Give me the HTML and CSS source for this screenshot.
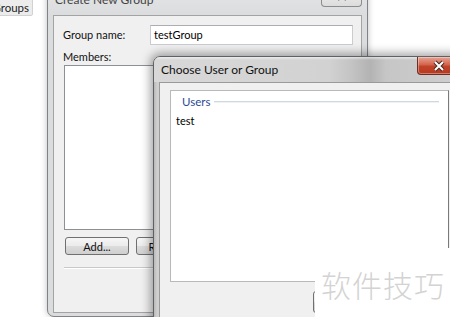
FILE: index.html
```html
<!DOCTYPE html>
<html lang="en">
<head>
    <meta charset="UTF-8">
    <title>Create New Group</title>
    <link rel="stylesheet" href="styles.css">
</head>
<body>
<div class="desk">
    <button class="tab-btn">Groups</button>

    <!-- back dialog -->
    <div class="win create">
        <div class="title-bar">
            <span class="title">Create New Group</span>
            <span class="close-btn idle">
                <svg width="12" height="10" viewBox="0 0 12 10"><path d="M2 1 L10 9 M10 1 L2 9" stroke="#555" stroke-width="2.2" fill="none"/></svg>
            </span>
        </div>
        <div class="client">
            <div class="field-row">
                <span class="lbl">Group name:</span>
                <div class="input">testGroup</div>
            </div>
            <div class="lbl members">Members:</div>
            <div class="listbox"></div>
            <div class="btn-row">
                <button class="btn">Add...</button>
                <button class="btn">Remove</button>
            </div>
            <div class="sep"></div>
        </div>
    </div>

    <!-- front dialog -->
    <div class="win choose">
        <div class="title-bar">
            <span class="title">Choose User or Group</span>
            <span class="close-btn hot">
                <svg width="14" height="12" viewBox="0 0 14 12">
                    <path d="M3 2 L11 10 M11 2 L3 10" stroke="#4a2a22" stroke-width="4" fill="none"/>
                    <path d="M3 2 L11 10 M11 2 L3 10" stroke="#fff" stroke-width="2" fill="none"/>
                </svg>
            </span>
        </div>
        <div class="client">
            <div class="pick-box">
                <div class="group-head"><span>Users</span><i class="rule"></i></div>
                <div class="item">test</div>
            </div>
            <div class="btn-row right">
                <button class="btn" aria-label="OK"></button>
            </div>
        </div>
    </div>

    <div class="watermark">软件技巧</div>
</div>
</body>
</html>
```

FILE: styles.css
```css
body {
    margin: 0;
    background: #fff;
    font-family: Lato, "Noto Sans", sans-serif;
    font-size: 11px;
    color: #000;
}
.desk {
    position: relative;
    width: 450px;
    height: 317px;
    overflow: hidden;
}
.tab-btn {
    position: absolute;
    left: -22px;
    top: -6px;
    width: 55px;
    height: 22px;
    padding: 5px 3px 0 0;
    text-align: right;
    font: inherit;
    font-size: 11.5px;
    color: #222;
    background: #ececec;
    border: 1px solid #d2d2d2;
    border-radius: 2px;
}

/* window frames */
.win {
    position: absolute;
    box-sizing: border-box;
    border: 1px solid #7f8387;
    border-radius: 7px;
    display: flex;
    flex-direction: column;
}
.title-bar {
    position: relative;
    display: flex;
    align-items: flex-end;
}
.title {
    font-size: 12px;
    color: #222;
    white-space: nowrap;
}
.close-btn {
    position: absolute;
    top: -1px;
    display: flex;
    align-items: center;
    justify-content: center;
    box-sizing: border-box;
    border-radius: 0 0 4px 4px;
}
.client {
    flex: 1;
    background: #f0f0f0;
    border: 1px solid #a3a3a3;
    display: flex;
    flex-direction: column;
}

/* Create New Group */
.create {
    left: 47px;
    top: -14px;
    width: 321px;
    height: 331px;
    padding: 0 5px 3px;
    background: #dadcde;
    box-shadow: 0 0 6px rgba(0, 0, 0, .25);
}
.create .title-bar {
    height: 28px;
    background: linear-gradient(#e4e6e8, #dadcde);
    margin: 0 -5px;
    padding: 0 0 0 7px;
}
.create .title {
    line-height: 14px;
    margin-bottom: 8px;
    color: #444;
}
.create .close-btn.idle {
    left: 273px;
    top: -1px;
    width: 41px;
    height: 21px;
    align-items: flex-end;
    padding-bottom: 5px;
    background: linear-gradient(#f4f4f4, #dcdcdc);
    border: 1px solid #8c8c8c;
    border-top: none;
}
.create .client {
    padding: 9px 8px 0 9px;
}
.field-row {
    display: flex;
    align-items: center;
}
.lbl {
    line-height: 14px;
    color: #111;
}
.field-row .lbl {
    width: 87px;
}
.input {
    box-sizing: border-box;
    width: 203px;
    height: 20px;
    padding: 2px 3px;
    line-height: 14px;
    background: #fff;
    border: 1px solid #c9cdd2;
    border-top-color: #abadb3;
}
.members {
    margin-top: 5px;
}
.listbox {
    box-sizing: border-box;
    height: 165px;
    margin: 1px 0 0 1px;
    background: #fff;
    border: 1px solid #8d9095;
}
.btn-row {
    display: flex;
    gap: 7px;
    margin: 7px 0 0 2px;
}
.btn {
    box-sizing: border-box;
    width: 64px;
    height: 18px;
    padding: 0;
    font: inherit;
    color: #111;
    background: linear-gradient(#f6f6f6 0%, #ebebeb 50%, #dcdcdc 51%, #cfcfcf 100%);
    border: 1px solid #707070;
    border-radius: 3px;
}
.sep {
    height: 1px;
    margin: 12px 0 0 1px;
    background: #c8c8c8;
    border-bottom: 1px solid #fff;
}

/* Choose User or Group */
.choose {
    left: 153px;
    top: 56px;
    width: 320px;
    height: 300px;
    padding: 0 5px;
    background: linear-gradient(90deg, #b9b9b9, #cfcfcf 3px, #c6c6c6);
    border-color: #5f6265;
    border-radius: 7px 7px 0 0;
    box-shadow: 0 0 10px 3px rgba(0, 0, 0, .35);
}
.choose .title-bar {
    height: 25px;
    margin: 0 -5px;
    padding-left: 7px;
    align-items: center;
    border-radius: 6px 6px 0 0;
    background:
        linear-gradient(rgba(255, 255, 255, .55), rgba(255, 255, 255, 0) 3px),
        linear-gradient(90deg, #d8d8d8 0%, #d2d2d2 55%, #c4c4c4 62%, #b3b3b3 68%, #c6c6c6 73%, #d0d0d0 100%);
}
.choose .title {
    font-size: 12px;
    color: #111;
    margin-top: -1px;
}
.close-btn.hot {
    left: 263px;
    top: 0;
    width: 43px;
    height: 18px;
    background: linear-gradient(#e9a395 0%, #d2654c 45%, #c0432a 55%, #b8391f 100%);
    border: 1px solid #6b2f24;
    border-top: none;
    box-shadow: inset 0 0 0 1px rgba(255, 255, 255, .35);
}
.choose .client {
    border-color: #9a9a9a;
    border-right: none;
    padding: 7px 0 0 10px;
}
.pick-box {
    box-sizing: border-box;
    width: 279px;
    height: 192px;
    background: #fff;
    border: 1px solid #b9b9b9;
    border-right-color: #7a7a7a;
    padding: 4px 9px 0 5px;
}
.group-head {
    display: flex;
    align-items: center;
    padding-left: 6px;
    line-height: 14px;
}
.group-head span {
    color: #2c4a98;
    font-size: 11.5px;
}
.rule {
    flex: 1;
    height: 1px;
    margin: -1px 0 0 4px;
    background: #cfd9e2;
    border-bottom: 1px solid #eef2f5;
}
.item {
    margin-top: 5px;
    line-height: 14px;
}
.btn-row.right {
    margin: 9px 0 0 143px;
}
.btn-row.right .btn {
    width: 75px;
    height: 22px;
}

.watermark {
    position: absolute;
    left: 315px;
    top: 248px;
    width: 135px;
    height: 69px;
    box-sizing: border-box;
    padding: 17px 0 0 6px;
    background: #fff;
    color: #d3d3d3;
    font-family: "Noto Sans CJK SC", sans-serif;
    font-weight: 300;
    font-size: 30px;
    line-height: 38px;
    letter-spacing: 1px;
}
```
